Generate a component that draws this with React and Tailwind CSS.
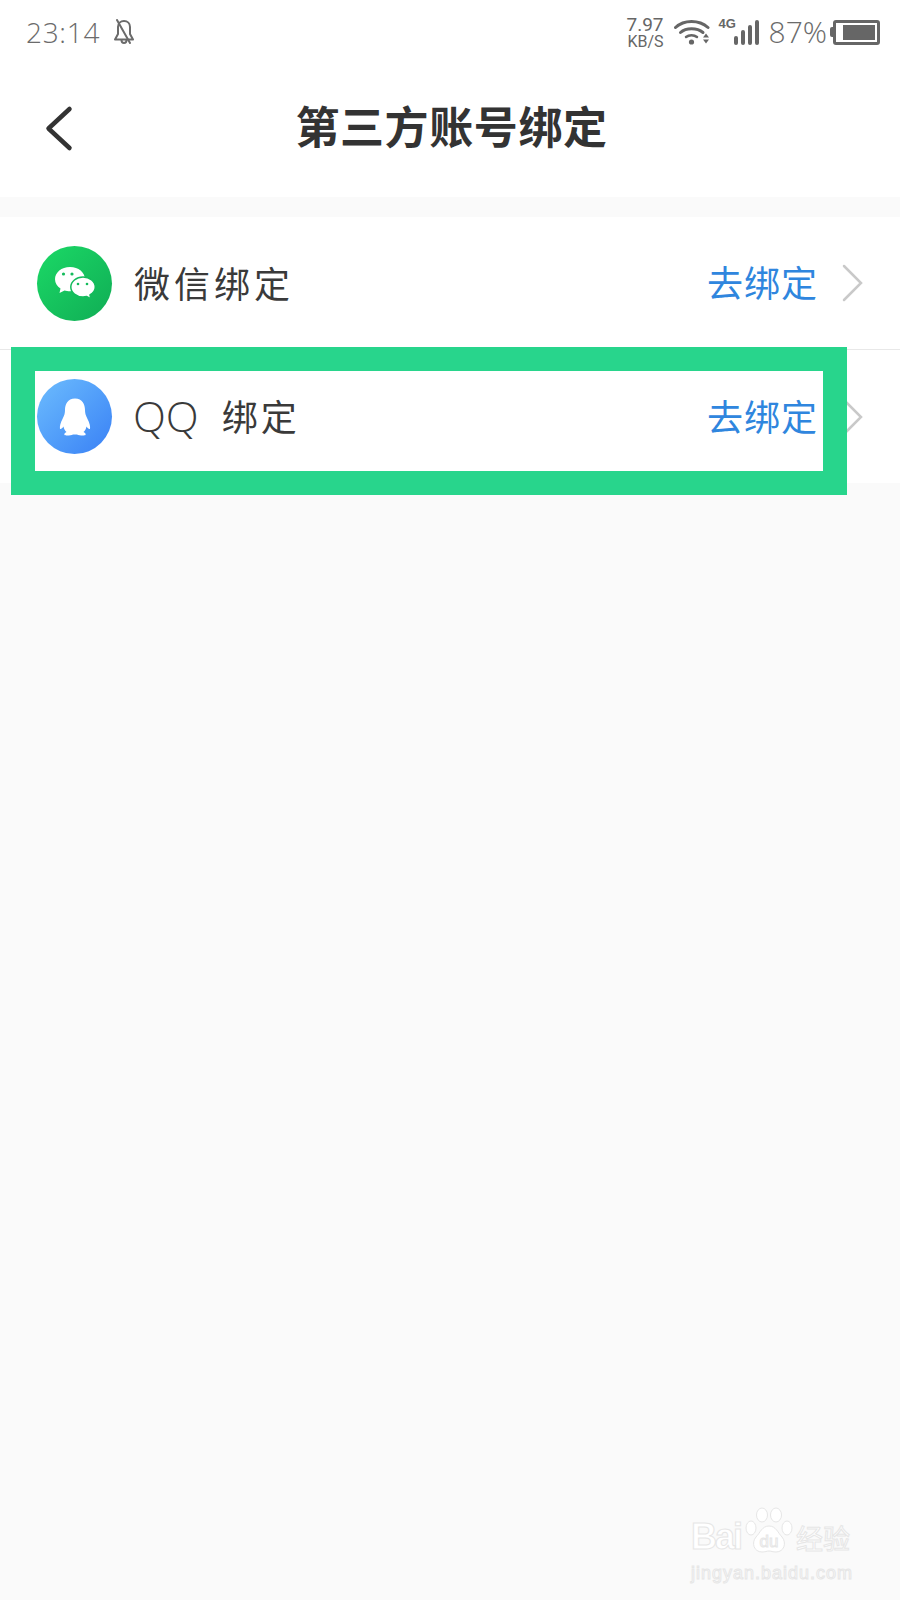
import React from 'react';

const cjk = "font-['Noto_Sans_CJK_SC','Noto_Sans',sans-serif]";

const BellOff = () => (
  <svg width="20" height="26" viewBox="0 0 20 26" fill="none" stroke="#6b6b6b" strokeWidth="2" strokeLinejoin="round" strokeLinecap="round">
    <path d="M1 20.500 L4 15 V8 C4 4.500 6.500 2 10 2 C13.500 2 16 4.500 16 8 V15 L19 20.500 Z" />
    <path d="M7.500 21 C7.500 25 12.500 25 12.500 21" />
    <path d="M3 1 L16 24" />
  </svg>
);

const Wifi = () => (
  <svg width="36" height="26" viewBox="0 0 36 26" fill="none">
    <path d="M1.500 8.500 C10 0.500 25 0.500 34 8.500" stroke="#666" strokeWidth="3" strokeLinecap="round" />
    <path d="M6.500 13.500 C12 8.500 23 8.500 29 13.500" stroke="#666" strokeWidth="3" strokeLinecap="round" />
    <path d="M12 18 C15 15.500 20 15.500 23 18" stroke="#666" strokeWidth="2.500" strokeLinecap="round" />
    <circle cx="17.500" cy="23" r="2.600" fill="#666" />
    <path d="M29 18.500 L32 14.500 L35 18.500 Z M29 20.500 L32 24.500 L35 20.500 Z" fill="#666" />
  </svg>
);

const Signal = () => (
  <div className="relative w-[40px] h-[26px] flex items-end justify-end gap-[3px]">
    <span className="absolute left-0 top-[-2px] text-[13px] leading-[14px] font-bold text-[#666] font-['Liberation_Sans',sans-serif]">4G</span>
    <span className="w-[4px] h-[9px] rounded-[2px] bg-[#666]" />
    <span className="w-[4px] h-[15px] rounded-[2px] bg-[#666]" />
    <span className="w-[4px] h-[20px] rounded-[2px] bg-[#666]" />
    <span className="w-[4px] h-[25px] rounded-[2px] bg-[#666]" />
  </div>
);

const Battery = () => (
  <div className="flex items-center">
    <span className="w-[3px] h-[10px] rounded-l-[2px] bg-[#666]" />
    <div className="w-[47px] h-[25px] rounded-[3px] border-[3px] border-[#666] p-[2px] flex justify-end">
      <span className="w-[32px] h-full bg-[#666]" />
    </div>
  </div>
);

const WeChatLogo = () => (
  <div className="w-[75px] h-[75px] rounded-full bg-gradient-to-br from-[#1bd966] to-[#10ad55] flex items-center justify-center">
    <svg width="42" height="34" viewBox="0 0 42 34">
      <path d="M16 1 C7.500 1 1 6.500 1 13.200 C1 17 3.200 20.300 6.500 22.500 L5.500 27 L10.500 24.500 C12 25 14 25.300 16 25.300 C24.500 25.300 31 19.800 31 13.200 C31 6.500 24.500 1 16 1 Z" fill="#fff" />
      <path d="M29 11 C22.300 11 16.800 15.700 16.800 21 C16.800 26.500 22.300 31 29 31 C30.300 31 31.500 30.800 32.700 30.500 L37 33 L36 29 C39.300 27 41.300 24.200 41.300 21 C41.300 15.700 35.800 11 29 11 Z" fill="#fff" stroke="#14bb5c" strokeWidth="1.500" />
      <circle cx="9.500" cy="8" r="1.600" fill="#14bb5c" />
      <circle cx="18" cy="8" r="1.600" fill="#14bb5c" />
      <circle cx="24" cy="18" r="1.300" fill="#14bb5c" />
      <circle cx="33" cy="18" r="1.300" fill="#14bb5c" />
    </svg>
  </div>
);

const QQLogo = () => (
  <div className="w-[75px] h-[75px] rounded-full bg-gradient-to-br from-[#6dbcfd] to-[#3a80f5] flex items-center justify-center">
    <svg width="32" height="38" viewBox="0 0 32 38" fill="#fff">
      <path d="M16 0.500 C8.500 0.500 6 6.500 6 12 C6 15 5.500 17 3.500 21 C1.500 25 0.500 28 1 31 C2 31.500 3.500 30 4.500 28.500 C5 31 6 33 7.500 34 C5.500 35 5 36 5.500 37 C6.500 37.800 12 37.500 14 36.500 L18 36.500 C20 37.500 25.500 37.800 26.500 37 C27 36 26.500 35 24.500 34 C26 33 27 31 27.500 28.500 C28.500 30 30 31.500 31 31 C31.500 28 30.500 25 28.500 21 C26.500 17 26 15 26 12 C26 6.500 23.500 0.500 16 0.500 Z" />
    </svg>
  </div>
);

const Chevron = () => (
  <svg width="22" height="38" viewBox="0 0 22 38" fill="none" stroke="#c9c9c9" strokeWidth="2.500" strokeLinecap="round">
    <path d="M2 2 L19 19 L2 36" />
  </svg>
);

const BindRow = ({ logo, children, border }) => (
  <div className={`h-[133px] flex items-center pl-[37px] pr-[36px] ${border ? 'border-b border-[#e8e8e8]' : ''}`}>
    {logo}
    <div className={`ml-[22px] pb-[3px] flex items-center text-[36px] leading-none tracking-[4px] text-[#3a3a3a] ${cjk}`}>{children}</div>
    <span className={`ml-auto pb-[4px] text-[36px] leading-none tracking-[1px] text-[#2f86de] ${cjk}`}>去绑定</span>
    <span className="ml-[24px] flex"><Chevron /></span>
  </div>
);

const Watermark = () => (
  <div className="absolute left-[691px] top-[1503px] w-[165px] text-white [-webkit-text-stroke:1px_#e6e6e6] font-['Liberation_Sans',sans-serif]">
    <div className="h-[52px] flex items-end">
      <span className="text-[36px] leading-[36px] font-bold tracking-[-2px]">Bai</span>
      <div className="relative ml-[4px] w-[48px] h-[48px] shrink-0 flex items-end justify-center">
        <svg className="absolute left-0 top-0" width="48" height="48" viewBox="0 0 48 48" fill="#fff" stroke="#e6e6e6">
          <ellipse cx="6" cy="21" rx="5" ry="7" />
          <ellipse cx="17" cy="8" rx="5.500" ry="7" />
          <ellipse cx="31" cy="8" rx="5.500" ry="7" />
          <ellipse cx="42" cy="21" rx="5" ry="7" />
          <path d="M24 19 C17 19 15 26 11 30 C6 36 9 45 17 45 C20 45 22 44 24 44 C26 44 28 45 31 45 C39 45 42 36 37 30 C33 26 31 19 24 19 Z" />
        </svg>
        <span className="relative mb-[3px] text-[17px] leading-[20px]">du</span>
      </div>
      <span className={`ml-[3px] text-[27px] leading-[34px] ${cjk}`}>经验</span>
    </div>
    <div className="mt-[8px] text-[18px] leading-[20px] tracking-[1px] whitespace-nowrap">jingyan.baidu.com</div>
  </div>
);

export default function App() {
  return (
    <div className="relative w-[900px] h-[1600px] overflow-hidden bg-[#fafafa]">
      <div className="bg-white h-[197px]">
        {/* status bar */}
        <div className="h-[64px] pl-[26px] pr-[20px] flex items-center text-[#6b6b6b] font-['Open_Sans',sans-serif]">
          <span className="text-[28px] leading-none tracking-[0.700px] font-light">23:14</span>
          <span className="ml-[14px] flex"><BellOff /></span>
          <div className="ml-auto flex items-center">
            <div className="flex flex-col items-end text-[#666] font-['Roboto',sans-serif] leading-none">
              <span className="text-[19px] leading-[19px]">7.97</span>
              <span className="text-[16px] leading-[16px]">KB/S</span>
            </div>
            <span className="ml-[10px] flex"><Wifi /></span>
            <span className="ml-[9px] flex"><Signal /></span>
            <span className="ml-[10px] text-[30px] leading-none font-light">87%</span>
            <span className="ml-[3px] flex"><Battery /></span>
          </div>
        </div>
        {/* nav bar */}
        <div className="relative h-[133px] flex items-center justify-center">
          <svg className="absolute left-[44px] top-[40px]" width="30" height="48" viewBox="0 0 30 48" fill="none" stroke="#333" strokeWidth="4.500" strokeLinecap="round" strokeLinejoin="round">
            <path d="M25.500 5 L4.500 24.500 L25.500 44" />
          </svg>
          <h1 className={`pb-[11px] pl-[3px] text-[44px] leading-none font-bold tracking-[0.600px] text-[#333] ${cjk}`}>第三方账号绑定</h1>
        </div>
      </div>

      <div className="mt-[20px] bg-white">
        <BindRow logo={<WeChatLogo />} border>微信绑定</BindRow>
        <BindRow logo={<QQLogo />}>
          <span className="-ml-[1px] text-[43px] tracking-normal font-light font-['Open_Sans',sans-serif]">QQ</span>
          <span className="ml-[23px] tracking-[3px]">绑定</span>
        </BindRow>
      </div>

      {/* annotation frame drawn over the screenshot */}
      <div className="absolute left-[11px] top-[347px] w-[836px] h-[148px] border-[24px] border-[#28d58c]" />

      <Watermark />
    </div>
  );
}
